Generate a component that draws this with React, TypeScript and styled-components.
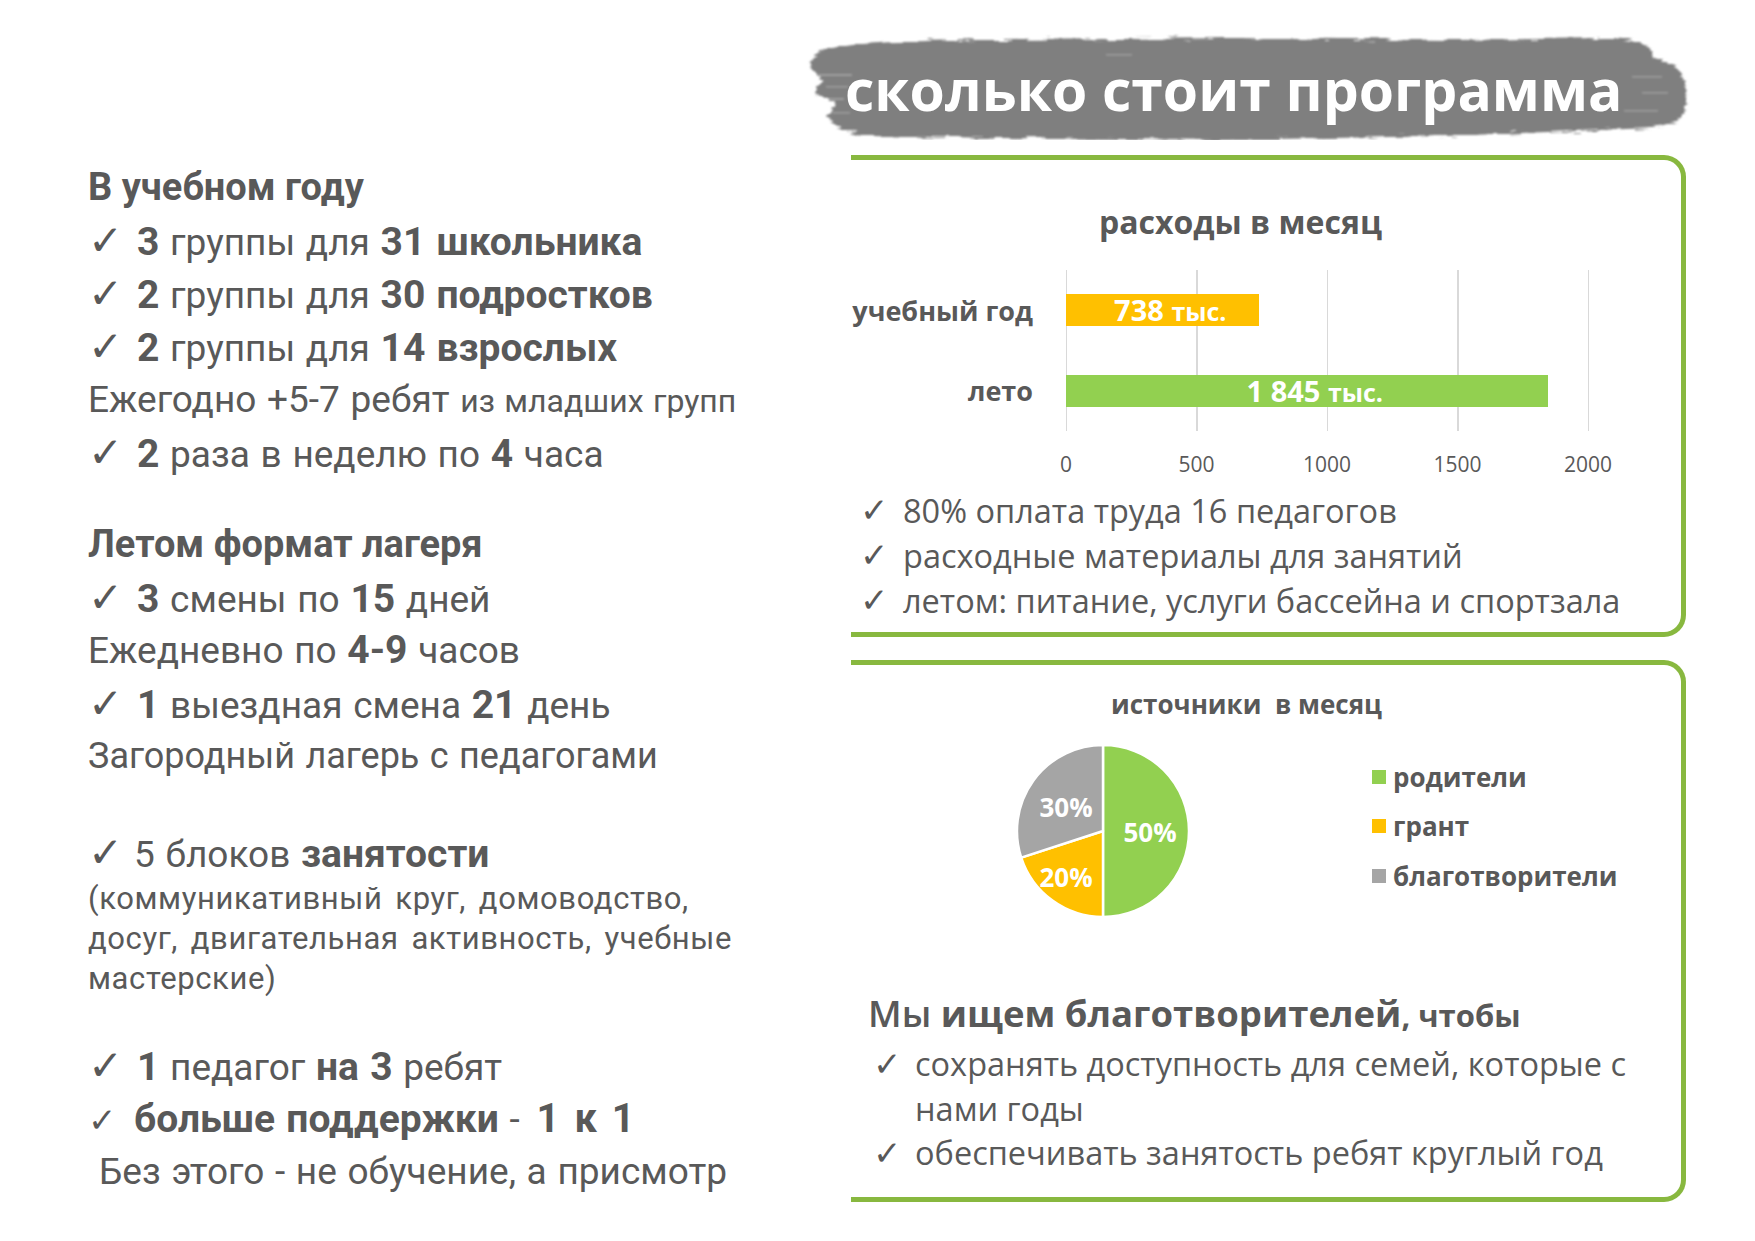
import React from "react";
import styled, { createGlobalStyle } from "styled-components";

const GlobalStyle = createGlobalStyle`
  html, body {
    margin: 0;
    padding: 0;
    background: #ffffff;
  }
  body {
    width: 1755px;
    height: 1241px;
    overflow: hidden;
    color: #595959;
    font-family: Roboto, "Open Sans", sans-serif;
  }
`;

const bars = [
  { label: "учебный год", value: 738, amount: "738", color: "#ffc000" },
  { label: "лето", value: 1845, amount: "1 845", color: "#92d050" },
];

const ticks = [0, 500, 1000, 1500, 2000];

const legend = [
  { label: "родители", color: "#92d050" },
  { label: "грант", color: "#ffc000" },
  { label: "благотворители", color: "#a5a5a5" },
];

const PLOT_W = 522;
const STEP = PLOT_W / 4;

export default function App() {
  return (
    <>
      <GlobalStyle />
      <Page>
        <LeftCol>
          <Block>
            <Heading>В учебном году</Heading>
            <Line>
              <Check $w={49} $size={42}>✓</Check>
              <B>3</B> группы для <B>31 школьника</B>
            </Line>
            <Line>
              <Check $w={49} $size={42}>✓</Check>
              <B>2</B> группы для <B>30 подростков</B>
            </Line>
            <Line>
              <Check $w={49} $size={42}>✓</Check>
              <B>2</B> группы для <B>14 взрослых</B>
            </Line>
            <Line>
              Ежегодно +5-7 ребят <Sm $size={32}>из младших групп</Sm>
            </Line>
            <Line>
              <Check $w={49} $size={42}>✓</Check>
              <B>2</B> раза в неделю по <B>4</B> часа
            </Line>
          </Block>

          <Block $gap={39}>
            <Heading>Летом формат лагеря</Heading>
            <Line>
              <Check $w={49} $size={42}>✓</Check>
              <B>3</B> смены по <B>15</B> дней
            </Line>
            <Line>
              Ежедневно по <B>4-9</B> часов
            </Line>
            <Line>
              <Check $w={49} $size={42}>✓</Check>
              <B>1</B> выездная смена <B>21</B> день
            </Line>
            <Line $size={36}>Загородный лагерь с педагогами</Line>
          </Block>

          <Block $gap={43}>
            <Line>
              <Check $w={46} $size={42}>✓</Check>5 блоков <B>занятости</B>
            </Line>
            <Small>(коммуникативный круг, домоводство,</Small>
            <Small>досуг, двигательная активность, учебные</Small>
            <Small>мастерские)</Small>
          </Block>

          <Block $gap={40}>
            <Line>
              <Check $w={49} $size={42}>✓</Check>
              <B>1</B> педагог <B>на 3</B> ребят
            </Line>
            <Line>
              <Check $w={46} $size={34}>✓</Check>
              <B>больше поддержки</B> - <Wide>1 к 1</Wide>
            </Line>
            <Line $indent={11}>Без этого - не обучение, а присмотр</Line>
          </Block>
        </LeftCol>

        <RightCol>
          <TitleWrap>
            <Brush viewBox="0 0 884 108" aria-hidden="true">
              <defs>
                <filter id="rough" x="-5%" y="-20%" width="110%" height="140%">
                  <feTurbulence type="fractalNoise" baseFrequency="0.05 0.35" numOctaves="2" seed="4" result="noise" />
                  <feDisplacementMap in="SourceGraphic" in2="noise" scale="9" xChannelSelector="R" yChannelSelector="G" />
                  <feGaussianBlur stdDeviation="1.1" />
                </filter>
                <filter id="soft">
                  <feGaussianBlur stdDeviation="0.9" />
                </filter>
              </defs>
              <path
                filter="url(#rough)"
                fill="#7f7f7f"
                d="M10 20 C40 10 120 8 200 8 L420 6 L650 8 L800 6 C830 6 850 14 846 24 L868 34 C882 44 884 72 874 88 L846 96 L640 104 L420 108 L200 106 L60 104 C36 100 24 92 22 84 L30 70 L8 62 L16 48 L4 34 Z"
              />
              <g fill="#ffffff" opacity="0.25" filter="url(#soft)">
                <rect x="12" y="42" width="34" height="2" />
                <rect x="20" y="54" width="22" height="1.5" />
                <rect x="8" y="66" width="30" height="2" />
                <rect x="26" y="80" width="18" height="1.5" />
                <rect x="300" y="22" width="26" height="1.5" />
                <rect x="826" y="44" width="30" height="1.5" />
                <rect x="836" y="60" width="26" height="1.5" />
                <rect x="818" y="78" width="34" height="1.5" />
              </g>
            </Brush>
            <TitleText>сколько стоит программа</TitleText>
          </TitleWrap>

          <Card $top={15} $h={482}>
            <ChartTitle>расходы в месяц</ChartTitle>
            <BarChart>
              {bars.map((b) => (
                <React.Fragment key={b.label}>
                  <BarLabel>{b.label}</BarLabel>
                  <BarTrack>
                    <Bar $color={b.color} style={{ width: (b.value / 2000) * PLOT_W }}>
                      {b.amount} <BarUnit>тыс.</BarUnit>
                    </Bar>
                  </BarTrack>
                </React.Fragment>
              ))}
            </BarChart>
            <Axis>
              {ticks.map((t) => (
                <Tick key={t}>{t}</Tick>
              ))}
            </Axis>
            <Bullets $top={9} $left={9} $lh={45}>
              <Bullet>
                <Check $w={43} $size={34}>✓</Check>
                <span>80% оплата труда 16 педагогов</span>
              </Bullet>
              <Bullet>
                <Check $w={43} $size={34}>✓</Check>
                <span>расходные материалы для занятий</span>
              </Bullet>
              <Bullet>
                <Check $w={43} $size={34}>✓</Check>
                <span>летом: питание, услуги бассейна и спортзала</span>
              </Bullet>
            </Bullets>
          </Card>

          <Card $top={23} $h={542}>
            <PieTitle>источники  в месяц</PieTitle>
            <PieRow>
              <svg width="176" height="176" viewBox="0 0 176 176">
                <g stroke="#ffffff" strokeWidth="2.5" strokeLinejoin="round">
                  <path d="M88 88 L88 2 A86 86 0 0 1 88 174 Z" fill="#92d050" />
                  <path d="M88 88 L88 174 A86 86 0 0 1 6.2 114.6 Z" fill="#ffc000" />
                  <path d="M88 88 L6.2 114.6 A86 86 0 0 1 88 2 Z" fill="#a5a5a5" />
                </g>
                <PieText x="135" y="89">50%</PieText>
                <PieText x="51" y="134">20%</PieText>
                <PieText x="51" y="64">30%</PieText>
              </svg>
              <Legend>
                {legend.map((l) => (
                  <LegendRow key={l.label}>
                    <Swatch $color={l.color} />
                    {l.label}
                  </LegendRow>
                ))}
              </Legend>
            </PieRow>
            <Ask>
              <AskSoft>Мы</AskSoft> ищем благотворителей<AskSmall>, чтобы</AskSmall>
            </Ask>
            <Bullets $top={3} $left={22} $lh={44.5}>
              <Bullet>
                <Check $w={42} $size={34}>✓</Check>
                <span>
                  сохранять доступность для семей, которые с<br />
                  нами годы
                </span>
              </Bullet>
              <Bullet>
                <Check $w={42} $size={34}>✓</Check>
                <span>обеспечивать занятость ребят круглый год</span>
              </Bullet>
            </Bullets>
          </Card>
        </RightCol>
      </Page>
    </>
  );
}

const Page = styled.div`
  display: grid;
  grid-template-columns: 806px 884px;
  width: 1755px;
  height: 1241px;
`;

/* left column */

const LeftCol = styled.div`
  padding: 161px 0 0 88px;
  font-family: Roboto, "Open Sans", sans-serif;
  color: #595959;
`;

const Block = styled.div<{ $gap?: number }>`
  margin-top: ${(p) => p.$gap ?? 0}px;
`;

const Line = styled.div<{ $indent?: number; $size?: number }>`
  height: 53px;
  padding-left: ${(p) => p.$indent ?? 0}px;
  font-size: ${(p) => p.$size ?? 37}px;
  line-height: 53px;
  word-spacing: 1.5px;
  white-space: nowrap;
`;

const Heading = styled(Line)`
  font-size: 38px;
  font-weight: 700;
  word-spacing: 0;
`;

const Small = styled.div`
  height: 40px;
  font-size: 31px;
  line-height: 40px;
  letter-spacing: 0.6px;
  word-spacing: 4.5px;
  white-space: nowrap;
`;

const B = styled.b`
  font-size: 39px;
  font-weight: 700;
`;

const Sm = styled.span<{ $size: number }>`
  font-size: ${(p) => p.$size}px;
`;

const Wide = styled.b`
  font-weight: 700;
  font-size: 40px;
  word-spacing: 5px;
  margin-left: 6px;
`;

const Check = styled.span<{ $w: number; $size: number }>`
  display: inline-block;
  flex: none;
  width: ${(p) => p.$w}px;
  font-family: "DejaVu Sans", sans-serif;
  font-size: ${(p) => p.$size}px;
  font-weight: 400;
  word-spacing: 0;
`;

/* right column */

const RightCol = styled.div`
  display: flex;
  flex-direction: column;
  padding-top: 32px;
  font-family: "Open Sans", sans-serif;
  color: #595959;
`;

const TitleWrap = styled.div`
  position: relative;
  height: 108px;
`;

const Brush = styled.svg`
  position: absolute;
  left: 0;
  top: 0;
  width: 884px;
  height: 108px;
`;

const TitleText = styled.h1`
  position: relative;
  margin: 0;
  padding: 6px 0 0 39px;
  font-size: 57px;
  font-weight: 700;
  line-height: 102px;
  color: #ffffff;
  white-space: nowrap;
`;

const Card = styled.section<{ $top: number; $h: number }>`
  display: flex;
  flex-direction: column;
  box-sizing: border-box;
  width: 835px;
  height: ${(p) => p.$h}px;
  margin: ${(p) => p.$top}px 0 0 45px;
  border: 5px solid #88b83f;
  border-left: none;
  border-radius: 0 22px 22px 0;
`;

const ChartTitle = styled.div`
  margin-top: 42px;
  padding-left: 248px;
  font-size: 32px;
  font-weight: 700;
  line-height: 40px;
`;

const BarChart = styled.div`
  display: grid;
  grid-template-columns: 182px ${PLOT_W + 1}px;
  grid-template-rows: 80.5px 80.5px;
  column-gap: 33px;
  margin-top: 28px;
`;

const BarLabel = styled.div`
  display: flex;
  align-items: center;
  justify-content: flex-end;
  font-size: 27px;
  font-weight: 700;
  white-space: nowrap;
`;

const BarTrack = styled.div`
  display: flex;
  align-items: center;
  background: repeating-linear-gradient(to right, #d9d9d9 0 1px, transparent 1px ${STEP}px);
`;

const Bar = styled.div<{ $color: string }>`
  box-sizing: border-box;
  height: 32px;
  padding-left: 16px;
  background: ${(p) => p.$color};
  color: #ffffff;
  font-size: 29px;
  font-weight: 700;
  line-height: 32px;
  text-align: center;
  white-space: nowrap;
`;

const BarUnit = styled.span`
  font-size: 25px;
`;

const Axis = styled.div`
  display: flex;
  margin: 18px 0 0 ${215 - STEP / 2}px;
`;

const Tick = styled.div`
  width: ${STEP}px;
  font-size: 21px;
  line-height: 30px;
  text-align: center;
`;

const Bullets = styled.div<{ $top: number; $left: number; $lh: number }>`
  display: flex;
  flex-direction: column;
  margin-top: ${(p) => p.$top}px;
  padding-left: ${(p) => p.$left}px;
  font-size: 32.5px;
  line-height: ${(p) => p.$lh}px;
`;

const Bullet = styled.div`
  display: flex;
  white-space: nowrap;
`;

const PieTitle = styled.div`
  margin-top: 21px;
  padding-left: 260px;
  font-size: 26px;
  font-weight: 700;
  line-height: 36px;
  white-space: pre;
`;

const PieRow = styled.div`
  display: flex;
  align-items: flex-start;
  margin-top: 21px;
  padding-left: 164px;
`;

const PieText = styled.text`
  fill: #ffffff;
  font-family: "Open Sans", sans-serif;
  font-size: 26px;
  font-weight: 700;
  text-anchor: middle;
  dominant-baseline: central;
`;

const Legend = styled.div`
  display: flex;
  flex-direction: column;
  margin-left: 181px;
  padding-top: 9px;
`;

const LegendRow = styled.div`
  display: flex;
  align-items: center;
  height: 49.5px;
  font-size: 26px;
  font-weight: 700;
  white-space: nowrap;
`;

const Swatch = styled.span<{ $color: string }>`
  width: 14px;
  height: 14px;
  margin-right: 7px;
  background: ${(p) => p.$color};
`;

const Ask = styled.div`
  margin-top: 70px;
  padding-left: 17px;
  font-size: 36.5px;
  font-weight: 700;
  line-height: 48px;
  white-space: nowrap;
`;

const AskSoft = styled.span`
  font-weight: 600;
`;

const AskSmall = styled.span`
  font-size: 31px;
`;
